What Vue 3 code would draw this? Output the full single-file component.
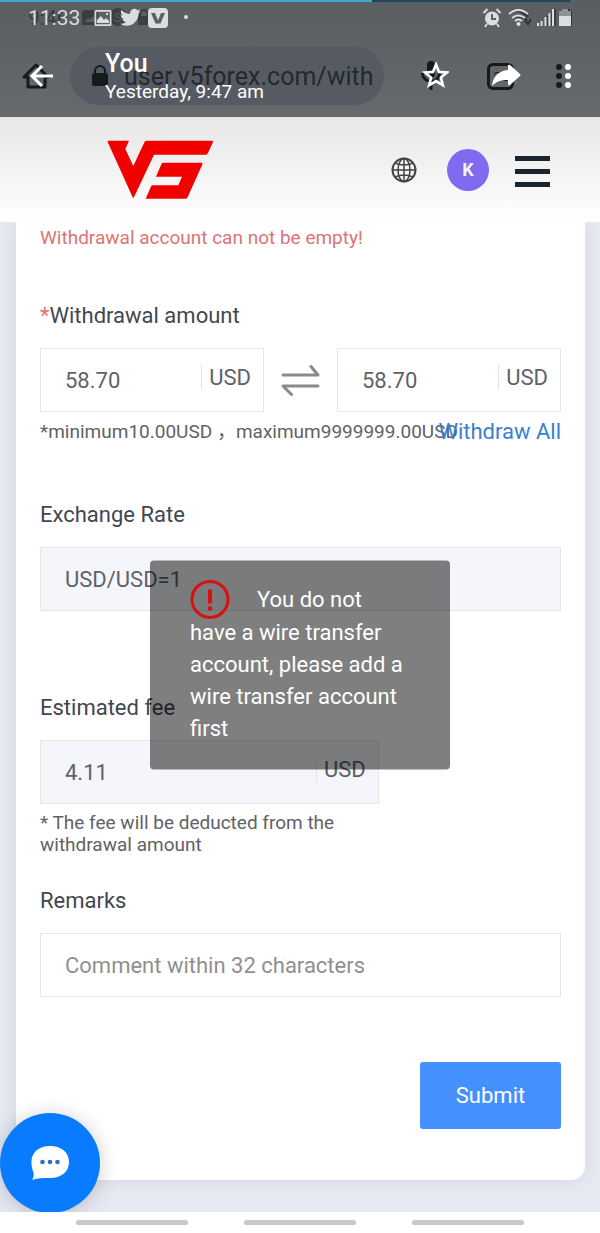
<script setup>
import { ref } from 'vue'

const amount = ref('58.70')
const received = ref('58.70')
const rate = ref('USD/USD=1')
const fee = ref('4.11')
const remarks = ref('')
</script>

<template>
  <div class="screen">
    <header class="top">
      <div class="progress"><span class="progress-done"></span><span class="progress-rest"></span></div>

      <div class="layer browser">
        <div class="status">
          <span class="clock">9:46</span>
          <svg class="ghosts" viewBox="0 0 72 20" width="72" height="20" fill="currentColor">
            <path d="M2 2h14v15H0V4zM3 14h12l-4-6-3 4-2-2z" fill-rule="evenodd" />
            <circle cx="36" cy="9" r="9" />
            <text x="32" y="14" font-size="13" fill="#5c6063">S</text>
            <path d="M56 8h1V6a5 5 0 0 1 10 0v2h1v9H56zm3 0h6V6a3 3 0 0 0-6 0z" />
          </svg>
        </div>
        <div class="toolbar">
          <button class="icon" aria-label="Home">
            <svg viewBox="0 0 28 28" width="28" height="28" fill="none" stroke="currentColor" stroke-width="3" stroke-linejoin="round">
              <path d="M2 15 14 3l12 12h-3v10H6V15z" />
            </svg>
          </button>
          <div class="address">
            <svg viewBox="0 0 16 22" width="16" height="22" fill="currentColor">
              <path d="M2 8V6a6 6 0 0 1 12 0v2a2 2 0 0 1 2 2v9a2 2 0 0 1-2 2H2a2 2 0 0 1-2-2v-9a2 2 0 0 1 2-2zm2 0h8V6a4 4 0 0 0-8 0z" />
            </svg>
            <span class="url">user.v5forex.com/with</span>
          </div>
          <button class="icon mic" aria-label="Voice search">
            <svg viewBox="0 0 20 30" width="20" height="30">
              <rect x="6" y="0" width="8" height="17" rx="4" fill="currentColor" />
              <path d="M1.500 12a8.500 8.500 0 0 0 17 0M10 21v8" fill="none" stroke="currentColor" stroke-width="3" />
            </svg>
          </button>
          <button class="icon tabs" aria-label="Open tabs"><span>22</span></button>
          <button class="icon more" aria-label="Browser menu">
            <svg viewBox="0 0 6 24" width="6" height="24" fill="currentColor"><circle cx="3" cy="3" r="3" /><circle cx="3" cy="12" r="3" /><circle cx="3" cy="21" r="3" /></svg>
          </button>
        </div>
      </div>

      <div class="layer viewer">
        <div class="status">
          <span class="clock">11:33</span>
          <svg class="app-icons" viewBox="0 0 96 20" width="96" height="20" fill="currentColor">
            <path d="M2 2h14a1.500 1.500 0 0 1 1.500 1.500v13A1.500 1.500 0 0 1 16 18H2a1.500 1.500 0 0 1-1.500-1.500v-13A1.500 1.500 0 0 1 2 2zm.3 1.800v12.400h13.400V3.800zM3 15v-3l4-4 3 4 2-2 3 3v2zM12 5h2v2h-2z" fill-rule="evenodd" />
            <path transform="translate(26 -1) scale(.86)" d="M23.950 4.570a10 10 0 0 1-2.820.77 4.960 4.960 0 0 0 2.160-2.720c-.95.560-2 .96-3.130 1.180a4.920 4.920 0 0 0-8.380 4.480C7.690 8.090 4.070 6.130 1.640 3.160a4.820 4.820 0 0 0-.67 2.480c0 1.710.87 3.210 2.190 4.100a4.900 4.900 0 0 1-2.230-.62v.06a4.920 4.920 0 0 0 3.950 4.830 5 5 0 0 1-2.210.08 4.940 4.940 0 0 0 4.600 3.420A9.870 9.870 0 0 1 0 19.540a13.990 13.990 0 0 0 7.550 2.210c9.050 0 14-7.500 14-13.980 0-.21 0-.42-.02-.63a9.940 9.940 0 0 0 2.420-2.570z" />
            <rect x="54" y="0" width="20" height="20" rx="4" />
            <path d="m57 5 4.500 10.500h5L71 5h-4l-3 7.500L61 5z" fill="#5c6063" />
            <circle cx="92" cy="9" r="2" />
          </svg>
          <svg class="system" viewBox="0 0 90 20" width="90" height="20" fill="none" stroke="currentColor">
            <circle cx="10" cy="10.500" r="7" fill="currentColor" stroke="none" />
            <path d="M10 6v5h4" stroke="#5c6063" stroke-width="2" />
            <path d="m1.500 5 4-4M18.500 5l-4-4M5 16l-2 3M15 16l2 3" stroke-width="2" />
            <g stroke="#303538" stroke-width="2"><path d="M30 3q9-2 16 6M34 9q7-2 11 4M43 13l3 3 3-5" /></g>
            <g stroke-width="2"><path d="M27 6q9-8 19 0M30 10q6-5 13 0M33 13q3-3 7 0" /></g>
            <circle cx="36.500" cy="16" r="2" fill="currentColor" stroke="none" />
            <path d="M73 1v17M69 5v13M65 8v10" stroke="#303538" stroke-width="1.500" />
            <path d="M56 15v3M59.500 13v5M63.500 9v9M67.500 5v13M71 1v17" stroke-width="2" />
            <path d="M79 3h3V1h6v2h3v15H79z" fill="#303538" stroke="none" />
            <path d="M77 3h3V1h6v2h3v6H77z" fill="#909394" stroke="none" />
            <path d="M77 8h12v10H77z" fill="currentColor" stroke="none" />
          </svg>
        </div>
        <div class="toolbar">
          <button class="icon back" aria-label="Back">
            <svg viewBox="0 0 26 24" width="26" height="24" fill="none" stroke="currentColor" stroke-width="3"><path d="M24 12H3M13 2 3 12l10 10" /></svg>
          </button>
          <div class="sender">
            <strong>You</strong>
            <span>Yesterday, 9:47 am</span>
          </div>
          <button class="icon star" aria-label="Star">
            <svg viewBox="0 0 28 28" width="28" height="28" fill="none" stroke="currentColor" stroke-width="2.600"><path d="m15 2.500 3 7.400 8 .6-6.100 5.100 2 7.700L15 19.100l-6.900 4.200 2-7.700L4 10.500l8-.6z" /></svg>
          </button>
          <button class="icon share" aria-label="Share">
            <svg viewBox="0 0 30 24" width="30" height="24" fill="currentColor"><path d="M17 2q0-2 2-1l10 9q1 1 0 2l-10 9q-2 1-2-1v-4C9 16 5 18 1 22 2 13 7 7 17 6z" /></svg>
          </button>
          <button class="icon more" aria-label="More options">
            <svg viewBox="0 0 6 24" width="6" height="24" fill="currentColor"><circle cx="3" cy="3" r="3" /><circle cx="3" cy="12" r="3" /><circle cx="3" cy="21" r="3" /></svg>
          </button>
        </div>
      </div>
    </header>

    <main class="page">
      <div class="site-bar">
        <a class="logo" href="#" aria-label="V5 home">
          <svg viewBox="0 0 107 60" width="107" height="60" fill="#f20000">
            <path d="M1.500.7H22L18.300 9l8 17L37.500 2Q38 .7 40 .7h65q1.500 0 1 1.300l-5.300 11.500q-.7 1.200-2 1.200H47L26.800 57.500q-.5.800-1 0L.7 2Q.3.700 1.500.7z" />
            <path d="M56 22.700h38.500q1.500 0 1 1.300L80.500 57.500q-.5 1.200-2 1.200H38.700L44 46.500q.5-1.200 2-1.200h25.300L75 36.700H49L54.500 24q.5-1.300 1.500-1.300z" />
          </svg>
        </a>
        <button class="icon globe" aria-label="Language">
          <svg viewBox="0 0 26 26" width="26" height="26" fill="none" stroke="currentColor" stroke-width="1.500">
            <circle cx="13" cy="13" r="11.500" stroke-width="2" />
            <ellipse cx="13" cy="13" rx="6" ry="11.500" />
            <path d="M13 1v24M1 13h24M4 6q9 4 18 0M4 20q9-4 18 0" />
          </svg>
        </button>
        <button class="avatar" aria-label="Account">K</button>
        <button class="burger" aria-label="Menu"><i></i><i></i><i></i></button>
      </div>

      <form class="card" @submit.prevent>
        <p class="error">Withdrawal account can not be empty!</p>

        <section class="group amount">
          <label for="amount"><em>*</em>Withdrawal amount</label>
          <div class="pair">
            <div class="field">
              <input id="amount" v-model="amount" type="text">
              <span class="unit">USD</span>
            </div>
            <svg class="swap" viewBox="0 0 39 32" width="39" height="32" fill="none" stroke="#8a8a8a" stroke-width="3" stroke-linecap="round" stroke-linejoin="round">
              <path d="M2 11h35l-7-8.500M37 22H2l8.500 8.500" />
            </svg>
            <div class="field">
              <input v-model="received" type="text" aria-label="Received amount">
              <span class="unit">USD</span>
            </div>
          </div>
          <div class="limits">
            <span>*minimum10.00USD ，maximum9999999.00USD</span>
            <a href="#">Withdraw All</a>
          </div>
        </section>

        <section class="group rate">
          <label for="rate">Exchange Rate</label>
          <div class="field muted">
            <input id="rate" v-model="rate" type="text" readonly>
          </div>
        </section>

        <section class="group fee">
          <label for="fee">Estimated fee</label>
          <div class="field muted">
            <input id="fee" v-model="fee" type="text" readonly>
            <span class="unit">USD</span>
          </div>
          <p class="note">* The fee will be deducted from the withdrawal amount</p>
        </section>

        <section class="group remarks">
          <label for="remarks">Remarks</label>
          <div class="field">
            <input id="remarks" v-model="remarks" type="text" placeholder="Comment within 32 characters">
          </div>
        </section>

        <button class="submit" type="submit">Submit</button>
      </form>

      <div class="toast" role="alert">
        <svg viewBox="0 0 40 40" width="40" height="40" fill="none" stroke="#d81010" stroke-width="3">
          <circle cx="20" cy="20" r="18" />
          <path d="M20 10v14M20 27v4" stroke-width="4" />
        </svg>You do not have a wire transfer account, please add a wire transfer account first
      </div>

      <button class="chat" aria-label="Chat">
        <svg viewBox="0 0 40 36" width="40" height="36">
          <path d="M20 1c11 0 19 6 19 16s-8 16-19 16c-7 0-12 0-18 2 2-3 2-6 1-9C-2 12 5 1 20 1z" fill="#fff" />
          <g fill="#2f6fc0"><circle cx="12.500" cy="17" r="2.300" /><circle cx="20" cy="17" r="2.300" /><circle cx="27.500" cy="17" r="2.300" /></g>
        </svg>
      </button>
    </main>

    <nav class="system-nav" aria-label="System navigation">
      <i></i><i></i><i></i>
    </nav>
  </div>
</template>

<style>
body {
  margin: 0;
  background: #fff;
}
</style>

<style scoped>
.screen {
  display: flex;
  flex-direction: column;
  min-height: 100vh;
  font-family: Roboto, "Noto Sans CJK SC", sans-serif;
  color: #606266;
}

.screen * {
  box-sizing: border-box;
}

button {
  padding: 0;
  border: 0;
  background: none;
  color: inherit;
  font-family: inherit;
}

.icon {
  display: flex;
  flex: none;
}

svg {
  flex: none;
}

/* Stacked app bars */
.top {
  position: relative;
  display: grid;
  grid-template-columns: minmax(0, 1fr);
  height: 117px;
  overflow: hidden;
  background: linear-gradient(#5a5e60, #676a6d);
}

.progress {
  position: absolute;
  inset: 0 0 auto;
  display: flex;
  height: 2px;
}

.progress-done {
  width: 62%;
  background: #40a9d0;
}

.progress-rest {
  width: 33%;
  background: #1c4555;
}

.layer {
  grid-area: 1 / 1;
  display: grid;
  grid-template-rows: 35px 82px;
  grid-template-columns: minmax(0, 1fr);
  min-width: 0;
}

.browser {
  color: #16191d;
}

.viewer {
  z-index: 1;
  color: #fff;
}

.status {
  display: flex;
  align-items: center;
  padding: 0 28px;
}

.viewer .status {
  color: #dcdddd;
}

.browser .status {
  color: #3a3e41;
}

.clock {
  width: 54px;
  font-size: 21px;
}

.app-icons {
  margin-left: 12px;
}

.system {
  margin-left: auto;
}

.toolbar {
  display: flex;
  align-items: center;
}

.browser .toolbar {
  padding: 0 38px 0 22px;
}

.address {
  display: flex;
  flex: 1;
  align-items: center;
  gap: 16px;
  min-width: 0;
  height: 58px;
  margin-left: 20px;
  padding: 0 12px 0 22px;
  border-radius: 29px;
  background: #565b63;
}

.url {
  flex: 1;
  overflow: hidden;
  color: #24282e;
  font-size: 25px;
  white-space: nowrap;
}

.mic {
  margin-left: 37px;
}

.tabs {
  align-items: center;
  justify-content: center;
  width: 27px;
  height: 27px;
  margin: 0 42px 0 46px;
  border: 3px solid;
  border-radius: 6px;
  font-size: 13px;
}

.viewer .toolbar {
  padding: 0 29px;
}

.sender {
  display: flex;
  flex: 1;
  flex-direction: column;
  margin-left: 50px;
  padding-top: 3px;
  font-size: 19px;
  line-height: 28px;
}

.sender strong {
  font-size: 25px;
  font-weight: 500;
}

.share {
  margin: 0 44px 0 42px;
}

/* Site */
.page {
  position: relative;
  flex: 1;
  overflow: hidden;
  background: #e6e9f2;
}

.site-bar {
  position: relative;
  z-index: 1;
  display: flex;
  align-items: center;
  height: 105px;
  padding: 0 50px 0 107px;
  background: linear-gradient(#e7e7e7, #fff);
}

.logo {
  display: flex;
  margin-right: auto;
}

.globe {
  color: #444;
}

.avatar {
  width: 42px;
  height: 42px;
  margin: 0 26px 0 30px;
  border-radius: 50%;
  background: #7f6af0;
  color: #f2f2f2;
  font-size: 18px;
  font-weight: 700;
}

.burger {
  display: grid;
  gap: 8px;
  width: 35px;
  padding-top: 4px;
}

.burger i {
  height: 5px;
  background: #1c2430;
}

.card {
  display: flex;
  flex-direction: column;
  margin: 0 15px 32px 16px;
  padding: 0 24px 51px;
  border-radius: 0 0 14px 14px;
  background: #fff;
  box-shadow: 0 0 16px rgba(60, 70, 100, 0.1);
}

.error {
  margin: 0;
  color: #db7474;
  font-size: 19px;
  line-height: 32px;
}

.group label {
  display: block;
  margin-bottom: 16px;
  color: #414750;
  font-size: 22px;
  line-height: 32px;
}

.group label em {
  color: #e57373;
  font-style: normal;
}

.amount {
  margin-top: 46px;
}

.rate {
  margin-top: 55px;
}

.fee {
  width: 65%;
  margin-top: 81px;
}

.remarks {
  margin-top: 29px;
}

.pair {
  display: flex;
  align-items: center;
  gap: 17px;
}

.field {
  display: flex;
  flex: 1;
  min-width: 0;
  height: 64px;
  border: 1px solid #e6e6e6;
  background: #fff;
}

.muted {
  background: #f4f6fb;
}

.field input {
  flex: 1;
  width: 0;
  min-width: 0;
  padding: 0 0 0 24px;
  border: 0;
  outline: 0;
  background: none;
  color: #606266;
  font-family: inherit;
  font-size: 22px;
}

.field input::placeholder {
  color: #8f8f8f;
  opacity: 1;
}

.unit {
  height: 26px;
  margin: 15px 12px 0 0;
  padding-left: 7px;
  border-left: 1px solid #e4e4e4;
  font-size: 22px;
  line-height: 28px;
}

.limits {
  display: flex;
  margin-top: 8px;
  font-size: 19px;
  line-height: 24px;
  white-space: nowrap;
}

.limits span {
  flex: 1;
  width: 0;
}

.limits a {
  color: #3a7fd0;
  font-size: 22px;
  text-decoration: none;
}

.note {
  margin: 8px 0 0;
  font-size: 19px;
  line-height: 22px;
}

.submit {
  align-self: flex-end;
  width: 141px;
  height: 67px;
  margin-top: 65px;
  border-radius: 3px;
  background: #4590ff;
  color: #fff;
  font-size: 22px;
}

.toast {
  position: absolute;
  top: 50%;
  left: 50%;
  width: 300px;
  padding: 24px 40px;
  border-radius: 4px;
  background: rgba(0, 0, 0, 0.5);
  color: #fff;
  font-size: 22px;
  line-height: 32px;
  transform: translate(-50%, -50%);
}

.toast svg {
  margin: -6px 27px -2px 0;
  vertical-align: middle;
}

.chat {
  position: absolute;
  bottom: -1px;
  left: 0;
  display: grid;
  place-items: center;
  width: 100px;
  height: 100px;
  border-radius: 50%;
  background: #087bff;
  box-shadow: 0 2px 20px rgba(0, 0, 0, 0.2);
}

.system-nav {
  display: flex;
  justify-content: center;
  gap: 56px;
  height: 21px;
  padding-top: 8px;
  background: #fff;
}

.system-nav i {
  width: 112px;
  height: 5px;
  border-radius: 3px;
  background: #c8c8c8;
}
</style>
